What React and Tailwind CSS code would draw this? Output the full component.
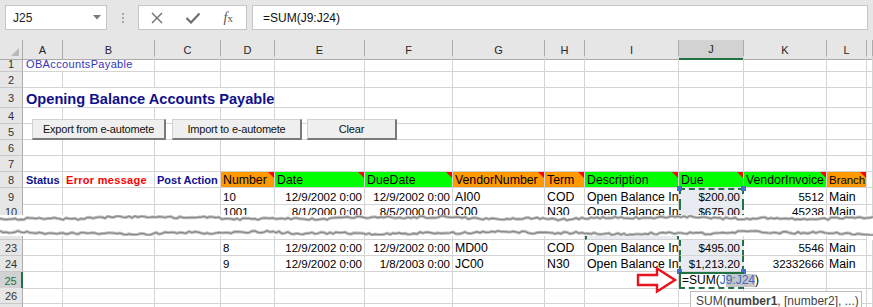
import React from "react";

const T = "grid grid-cols-[23px_40px_92px_66px_54px_90px_88px_92px_40px_94px_65px_83px_40px_6px]";
const G = "border-r border-b border-[#d4d4d4]";
const HDR = "bg-[#e6e6e6] border-r border-b border-r-[#ababab] border-b-[#c8c8c8] flex items-end justify-center leading-[13px] text-[11px] text-[#333]";

function rand(i, seed) {
  const s = Math.sin(i * 12.9898 + seed * 78.233) * 43758.5453;
  return s - Math.floor(s);
}
function edge(base, seed) {
  const pts = [];
  for (let x = 0; x <= 876; x += 3) {
    const y = base + (rand(x, seed) - 0.5) * 2.2 + Math.sin(x / 41 + seed) * 0.9 + Math.sin(x / 13 + seed * 2) * 0.5;
    pts.push([x, y]);
  }
  return pts;
}

function Tear() {
  const top = edge(3, 1);
  const bot = edge(18, 5);
  const topD = "M" + top.map((p) => p[0] + "," + p[1].toFixed(2)).join(" L");
  const botD = "M" + bot.map((p) => p[0] + "," + p[1].toFixed(2)).join(" L");
  const fill =
    topD +
    " " +
    bot
      .slice()
      .reverse()
      .map((p) => "L" + p[0] + "," + p[1].toFixed(2))
      .join(" ") +
    " Z";
  return (
    <svg width="873" height="21" viewBox="0 0 873 21" className="block">
      <path d={fill} fill="#ffffff" />
      <path d={topD} fill="none" stroke="#c4c4c4" strokeWidth="3.2" />
      <path d={topD} fill="none" stroke="#8a8a8a" strokeWidth="1.3" />
      <path d={botD} fill="none" stroke="#c4c4c4" strokeWidth="3.2" />
      <path d={botD} fill="none" stroke="#8a8a8a" strokeWidth="1.3" />
    </svg>
  );
}

function Cell({ children, align = "left", num }) {
  const a = align === "right" ? "justify-end pr-[2px]" : "justify-start pl-[2px]";
  const s = num ? "text-[11.5px]" : "text-[12.3px]";
  return (
    <div className={`${G} flex items-end overflow-hidden whitespace-nowrap leading-[14px] ${s} ${a}`}>
      {children}
    </div>
  );
}

function RowHead({ n, active }) {
  if (active)
    return (
      <div className="bg-[#d2d2d2] border-b border-b-[#c8c8c8] border-r-2 border-r-[#217346] flex items-end justify-center leading-[13px] text-[11px] text-[#217346]">
        {n}
      </div>
    );
  return <div className={HDR}>{n}</div>;
}

function JCell({ children, first, last }) {
  return (
    <div
      className={`relative bg-[#e8ebf1] border-b border-b-[#d4d4d4] border-l-2 border-r-2 border-l-[#217346] border-r-[#217346] border-solid [border-left-style:dashed] [border-right-style:dashed] flex items-end justify-end pr-[2px] whitespace-nowrap leading-[14px] text-[11.5px] ${
        first ? "border-t-2 border-t-[#217346] [border-top-style:dashed]" : ""
      } ${last ? "border-b-[#4472c4]" : ""}`}
    >
      {children}
      {first && (
        <>
          <span className="absolute left-[-4px] top-[-4px] w-[5px] h-[5px] bg-[#4472c4]" />
          <span className="absolute right-[-4px] top-[-4px] w-[5px] h-[5px] bg-[#4472c4]" />
        </>
      )}
      {last && (
        <>
          <span className="absolute left-[-4px] bottom-[-3px] w-[5px] h-[5px] bg-[#4472c4] z-10" />
          <span className="absolute right-[-4px] bottom-[-3px] w-[5px] h-[5px] bg-[#4472c4] z-10" />
        </>
      )}
    </div>
  );
}

function Empty({ n = 1 }) {
  return Array.from({ length: n }).map((_, i) => <div key={i} className={G} />);
}

function DataRow({ n, d, first, last }) {
  return (
    <div className={`${T} h-[16px]`}>
      <RowHead n={n} />
      <Empty n={3} />
      <Cell num>{d[0]}</Cell>
      <Cell num align="right">{d[1]}</Cell>
      <Cell num align="right">{d[2]}</Cell>
      <Cell>{d[3]}</Cell>
      <Cell>{d[4]}</Cell>
      <Cell>{d[5]}</Cell>
      <JCell first={first} last={last}>
        {d[6]}
      </JCell>
      <Cell num align="right">{d[7]}</Cell>
      <Cell>{d[8]}</Cell>
      <Empty />
    </div>
  );
}

function EmptyRow({ n, h = "h-[16px]" }) {
  return (
    <div className={`${T} ${h}`}>
      <RowHead n={n} />
      <Empty n={13} />
    </div>
  );
}

function Hd({ children, color, small }) {
  return (
    <div
      className={`relative ${color} border-r border-b border-[#d4d4d4] flex items-end pl-[2px] overflow-hidden whitespace-nowrap leading-[14px] ${
        small ? "text-[11.6px] tracking-[-0.1px]" : "text-[12.3px]"
      } text-black`}
    >
      {children}
      <span className="absolute right-0 top-0 w-0 h-0 border-t-[6px] border-t-[#ff0000] border-l-[6px] border-l-transparent" />
    </div>
  );
}

function Btn({ children, cls }) {
  return (
    <div
      className={`absolute top-[119px] h-[21px] bg-[#efefef] border-t border-l border-[#d0d0d0] border-r-2 border-b-2 border-r-[#7a7a7a] border-b-[#7a7a7a] flex items-center justify-center text-[11px] tracking-[-0.2px] text-[#111] ${cls}`}
    >
      {children}
    </div>
  );
}

export default function App() {
  const letters = ["A", "B", "C", "D", "E", "F", "G", "H", "I", "J", "K", "L", ""];
  return (
    <div className="relative w-[873px] h-[307px] overflow-hidden bg-white font-['Liberation_Sans',Arial,sans-serif] text-black">
      {/* formula bar */}
      <div className="h-[40px] bg-[#e6e6e6] flex items-start pt-[5px] pl-[5px]">
        <div className="w-[102px] h-[25px] bg-white border border-[#c6c6c6] flex items-center justify-between pl-[7px] pr-[5px]">
          <span className="text-[12px] text-[#222]">J25</span>
          <svg width="8" height="5" viewBox="0 0 8 5">
            <path d="M0 0 L8 0 L4 4.5 Z" fill="#7a7a7a" />
          </svg>
        </div>
        <div className="w-[31px] h-[25px] flex flex-col items-center justify-center gap-[2px]">
          <span className="w-[2px] h-[2px] bg-[#a6a6a6]" />
          <span className="w-[2px] h-[2px] bg-[#a6a6a6]" />
          <span className="w-[2px] h-[2px] bg-[#a6a6a6]" />
        </div>
        <div className="w-[109px] h-[25px] bg-white border border-[#c6c6c6] flex items-center">
          <div className="flex-1 flex justify-center">
            <svg width="12" height="12" viewBox="0 0 12 12">
              <path d="M1 1 L11 11 M11 1 L1 11" stroke="#6e6e6e" strokeWidth="1.4" />
            </svg>
          </div>
          <div className="flex-1 flex justify-center">
            <svg width="16" height="12" viewBox="0 0 16 12">
              <path d="M1.5 6 L6 10.5 L14.5 1.5" stroke="#6e6e6e" strokeWidth="2.2" fill="none" />
            </svg>
          </div>
          <div className="flex-1 flex justify-center">
            <span className="font-['Liberation_Serif',serif] italic text-[14px] text-[#555] leading-none">
              f<span className="text-[11px] not-italic font-['Liberation_Serif',serif]">x</span>
            </span>
          </div>
        </div>
        <div className="ml-[5px] w-[616px] h-[25px] bg-white border border-[#c6c6c6] pl-[10px] flex items-center text-[12px] text-[#111]">
          =SUM(J9:J24)
        </div>
      </div>

      {/* column headers */}
      <div className={`${T} h-[16px]`}>
        <div className="relative bg-[#e6e6e6] border-r border-b border-[#ababab]">
          <span className="absolute right-[3px] bottom-[3px] w-0 h-0 border-b-[8px] border-b-[#b9b9b9] border-l-[8px] border-l-transparent" />
        </div>
        {letters.map((l, i) =>
          l === "J" ? (
            <div key={i} className="bg-[#d2d2d2] border-r border-r-[#ababab] border-b-2 border-b-[#217346] flex items-center justify-center text-[11px] text-[#262626] pt-[1px]">
              {l}
            </div>
          ) : (
            <div key={i} className="bg-[#e6e6e6] border-r border-b border-[#ababab] flex items-center justify-center text-[11px] text-[#262626] pt-[1px]">
              {l}
            </div>
          )
        )}
      </div>

      {/* top section */}
      <div className="h-[159px] overflow-hidden">
        <div className={`${T} h-[16px]`}>
          <RowHead n={1} />
          <div className={`${G} col-span-2 flex items-end pl-[3px] leading-[13px] text-[11px] tracking-[0.35px] text-[#3333bb] whitespace-nowrap`}>
            OBAccountsPayable
          </div>
          <Empty n={11} />
        </div>
        <EmptyRow n={2} />
        <div className={`${T} h-[20px]`}>
          <div className={`${HDR} pb-[2px]`}>3</div>
          <div className={`${G} col-span-4 flex items-end pl-[3px] leading-[16px] text-[14.6px] font-bold text-[#10108a] whitespace-nowrap`}>
            Opening Balance Accounts Payable
          </div>
          <Empty n={9} />
        </div>
        <EmptyRow n={4} />
        <EmptyRow n={5} />
        <EmptyRow n={6} />
        <EmptyRow n={7} />
        <div className={`${T} h-[16px]`}>
          <RowHead n={8} />
          <div className={`${G} flex items-end pl-[3px] leading-[13px] text-[11px] font-bold text-[#101090] whitespace-nowrap`}>Status</div>
          <div className={`${G} flex items-end pl-[3px] leading-[13px] text-[11px] font-bold tracking-[0.3px] text-[#ff0000] whitespace-nowrap`}>Error message</div>
          <div className={`${G} flex items-end pl-[2px] leading-[13px] text-[11px] font-bold text-[#101090] whitespace-nowrap`}>Post Action</div>
          <Hd color="bg-[#ff9900]">Number</Hd>
          <Hd color="bg-[#00ff00]">Date</Hd>
          <Hd color="bg-[#00ff00]">DueDate</Hd>
          <Hd color="bg-[#ff9900]">VendorNumber</Hd>
          <Hd color="bg-[#ff9900]">Term</Hd>
          <Hd color="bg-[#00ff00]">Description</Hd>
          <Hd color="bg-[#00ff00]">Due</Hd>
          <Hd color="bg-[#00ff00]">VendorInvoice</Hd>
          <Hd color="bg-[#ff9900]" small>Branch</Hd>
          <Empty />
        </div>
        <DataRow
          n={9}
          first
          d={["10", "12/9/2002 0:00", "12/9/2002 0:00", "AI00", "COD", "Open Balance Invoice", "$200.00", "5512", "Main"]}
        />
        <DataRow
          n={10}
          d={["1001", "8/1/2000 0:00", "8/5/2000 0:00", "C00", "N30", "Open Balance Invoice", "$675.00", "45238", "Main"]}
        />
      </div>

      <Tear />

      {/* bottom section */}
      <div className={`${T} h-[4px] overflow-hidden`}>
        <div className="bg-[#e6e6e6] border-r border-b border-r-[#ababab] border-b-[#c8c8c8]" />
        <Empty n={8} />
        <div className="bg-[#e8ebf1] border-b border-b-[#d4d4d4] border-l-2 border-r-2 border-l-[#217346] border-r-[#217346] border-solid [border-left-style:dashed] [border-right-style:dashed]" />
        <Empty n={3} />
      </div>
      <DataRow
        n={23}
        d={["8", "12/9/2002 0:00", "12/9/2002 0:00", "MD00", "COD", "Open Balance Invoice", "$495.00", "5546", "Main"]}
      />
      <DataRow
        n={24}
        last
        d={["9", "12/9/2002 0:00", "1/8/2003 0:00", "JC00", "N30", "Open Balance Invoice", "$1,213.20", "32332666", "Main"]}
      />
      <div className={`${T} h-[16px]`}>
        <RowHead n={25} active />
        <Empty n={9} />
        <div className="relative border-2 border-[#217346] [border-bottom-style:dashed] [border-right-style:dashed] bg-white flex items-end pl-[1px] leading-[13px] text-[12px] whitespace-nowrap z-10">
          =SUM(<span className="text-[#3a6cc4]">J</span>
          <span className="text-[#3a6cc4] bg-[#c6c6c6]">9:J24</span>)
          <span className="inline-block w-[1px] h-[12px] bg-black mb-[1px]" />
        </div>
        <Empty n={3} />
      </div>
      <EmptyRow n={26} />
      <EmptyRow n={27} />

      {/* overlays */}
      <Btn cls="left-[32px] w-[134px]">Export from e-automete</Btn>
      <Btn cls="left-[172px] w-[130px]">Import to e-automete</Btn>
      <Btn cls="left-[307px] w-[90px]">Clear</Btn>

      <svg className="absolute left-[635px] top-[266px]" width="44" height="28" viewBox="0 0 44 28">
        <path d="M3 9 L22 9 L22 2.5 L40 14 L22 25.5 L22 19 L3 19 Z" fill="#ffffff" stroke="#e8141e" strokeWidth="2.4" strokeLinejoin="miter" />
      </svg>

      <div className="absolute left-[690px] top-[291px] w-[172px] h-[22px] bg-white border border-[#bdbdbd] pl-[5px] pt-[1px] text-[12px] leading-[16px] text-[#444] whitespace-nowrap">
        SUM(<b>number1</b>, [number2], ...)
      </div>
    </div>
  );
}
